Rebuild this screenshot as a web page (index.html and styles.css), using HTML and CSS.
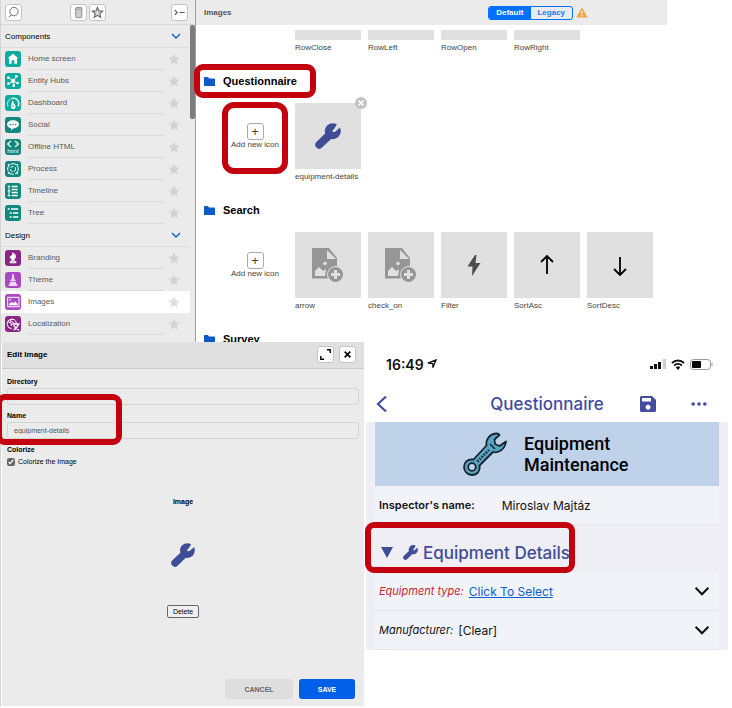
FILE: index.html
```html
<!DOCTYPE html>
<html lang="en">

<head>
    <meta charset="UTF-8">
    <meta name="viewport" content="width=device-width, initial-scale=1.0">
    <title>Images</title>
    <link rel="stylesheet" href="styles.css">
</head>

<body>
    <svg class="defs" aria-hidden="true">
        <mask id="notch" maskUnits="userSpaceOnUse" x="0" y="0" width="26" height="26">
            <rect width="26" height="26" fill="#fff" />
            <path d="M19.500 5.500L22.500 0H26v3.500L20.500 8.500Q18 9.500 17.500 8.500 17 7.500 19.500 5.500z" fill="#000" />
        </mask>
        <symbol id="star" viewBox="0 0 24 24">
            <path d="M12 1l3.200 7.600 8.300.7-6.300 5.400 1.900 8.100L12 18.500l-7.100 4.300 1.900-8.100L.5 9.300l8.300-.7z" />
        </symbol>
        <symbol id="wrench" viewBox="0 0 26 26">
            <g mask="url(#notch)">
                <circle cx="17.800" cy="8.200" r="8" />
                <path d="M4.300 21.700L15 11.500" stroke="currentColor" stroke-width="8" stroke-linecap="round" />
            </g>
        </symbol>
        <symbol id="folder" viewBox="0 0 22 18">
            <path d="M0 1.500Q0 0 1.500 0H8l2 3h10.500Q22 3 22 4.500V18H0z" />
        </symbol>
        <symbol id="chevron" viewBox="0 0 20 12">
            <path d="M2 2l8 8 8-8" fill="none" stroke="currentColor" stroke-width="2.600" />
        </symbol>
        <symbol id="newimage" viewBox="0 0 32 34">
            <path d="M0 0h17l8 10v8a8.800 8.800 0 0 0-9 12.500H0z" />
            <path d="M15 2v9h9z" fill="#e0e0e0" />
            <circle cx="13" cy="15.500" r="1.800" fill="#e0e0e0" />
            <path d="M3 28v-5l4-4 4 4 3-2-1 7z" fill="#e0e0e0" />
            <circle cx="23.500" cy="26.500" r="7.500" />
            <path d="M23.500 22v9M19 26.500h9" stroke="#e0e0e0" stroke-width="3" />
        </symbol>
    </svg>

    <div class="page">
        <div class="workspace">
            <nav class="sidebar">
                <div class="toolbar">
                    <button class="tool" aria-label="Search"><svg viewBox="0 0 16 16"><circle cx="8.500" cy="7" r="4.500" fill="none" stroke="#666" /><path d="M5.500 10.500L3 13" stroke="#666" /></svg></button>
                    <div class="toolGroup">
                        <button class="tool" aria-label="Device"><svg viewBox="0 0 16 16"><rect x="5" y="2.500" width="6.500" height="11" rx="1" fill="#ccc" stroke="#888" /><path d="M5 4.500h6.500" stroke="#999" /></svg></button>
                        <button class="tool" aria-label="Favorites"><svg viewBox="0 0 16 16"><path d="M8 2.500l1.500 3.800 4 .3-3.100 2.600 1 4L8 11l-3.400 2.200 1-4-3.100-2.600 4-.3z" fill="#ddd" stroke="#666" stroke-width="1.200" /></svg></button>
                    </div>
                    <button class="tool" aria-label="Collapse"><svg viewBox="0 0 16 16"><path d="M3 5.500L5.500 8 3 10.500M8 8h5.500" fill="none" stroke="#555" stroke-width="1.200" /></svg></button>
                </div>
                <div class="list">
                    <button class="group">Components <svg><use href="#chevron" /></svg></button>
                    <ul>
                        <li><svg class="ico teal" viewBox="0 0 24 24"><path d="M12 4l-8 7h2v8h4v-5h4v5h4v-8h2z" /></svg><a href="#">Home screen</a><svg class="star"><use href="#star" /></svg></li>
                        <li><svg class="ico teal" viewBox="0 0 24 24"><path d="M12 12L5 6M12 12l6-7M12 12l7 3M12 12l-6 4M12 12l2 7" class="line thin" /><circle cx="12" cy="12" r="3.200" /><circle cx="5" cy="7" r="2" /><circle cx="17" cy="5" r="2" /><circle cx="19" cy="15" r="2" /><circle cx="5" cy="16" r="2" /><circle cx="13" cy="19" r="2" /></svg><a href="#">Entity Hubs</a><svg class="star"><use href="#star" /></svg></li>
                        <li><svg class="ico teal" viewBox="0 0 24 24"><path d="M4.500 17a8 8 0 0 1 4-11" class="line" opacity=".6" /><path d="M9.500 5.500a8 8 0 0 1 10 11.500" class="line" /><path d="M11 8l4 7a3.500 3.500 0 1 1-6 2z" /><circle cx="12" cy="16.500" r="1.200" fill="#0bab9d" /></svg><a href="#">Dashboard</a><svg class="star"><use href="#star" /></svg></li>
                        <li><svg class="ico green" viewBox="0 0 24 24"><path d="M12 5c5 0 9 2.500 9 6s-4 6-8 6l-4 3v-3c-3-.5-6-3-6-6 0-3.500 4-6 9-6z" /><path d="M7 10.500h2v2H7zm4 0h2v2h-2zm4 0h2v2h-2z" fill="#12877d" /></svg><a href="#">Social</a><svg class="star"><use href="#star" /></svg></li>
                        <li><svg class="ico green" viewBox="0 0 24 24"><path d="M9 3L4 7.500 9 12M15 3l5 4.500-5 4.500" class="line" /><text x="12" y="21.500" text-anchor="middle">html</text></svg><a href="#">Offline HTML</a><svg class="star"><use href="#star" /></svg></li>
                        <li><svg class="ico green" viewBox="0 0 24 24"><circle cx="12" cy="12" r="8" class="line thin" stroke-dasharray="9 2" /><circle cx="12" cy="12" r="4" class="line thin" stroke-dasharray="5 2" /><path d="M4 4l4 1-3 3zM20 20l-4-1 3-3zM20 4l-1 4-3-3zM4 20l1-4 3 3z" opacity=".8" /></svg><a href="#">Process</a><svg class="star"><use href="#star" /></svg></li>
                        <li><svg class="ico green" viewBox="0 0 24 24"><path d="M6 4v16M4 5h4M4 12h4M4 19h4" class="line thin" /><path d="M10 4h9v2.500h-9zm0 4.500h9V11h-9zM10 13h9v2.500h-9zm0 4.500h9V20h-9z" /></svg><a href="#">Timeline</a><svg class="star"><use href="#star" /></svg></li>
                        <li><svg class="ico green" viewBox="0 0 24 24"><path d="M4 6h3M9 6h11M7 12h3M12 12h8M7 18h3M12 18h8" class="line" /></svg><a href="#">Tree</a><svg class="star"><use href="#star" /></svg></li>
                    </ul>
                    <button class="group">Design <svg><use href="#chevron" /></svg></button>
                    <ul>
                        <li><svg class="ico plum" viewBox="0 0 24 24"><path d="M11 3l2 2c3 1 4 4 3 7l-2 2 1 2H9l1-3c-2 0-3-1-3-3l4-3zM7 17h10v3H7z" /></svg><a href="#">Branding</a><svg class="star"><use href="#star" /></svg></li>
                        <li><svg class="ico violet" viewBox="0 0 24 24"><path d="M11 3h2l1 8 2 1v2H8v-2l2-1zM8 15h8l3 6H5z" opacity=".8" /></svg><a href="#">Theme</a><svg class="star"><use href="#star" /></svg></li>
                        <li class="active"><svg class="ico violet" viewBox="0 0 24 24"><rect x="4" y="5" width="17" height="14" class="line thin" /><path d="M6 17v-2l4-3 3 2 2-3 4 4v2z" /><circle cx="8" cy="8.500" r="1.200" /></svg><a href="#">Images</a><svg class="star"><use href="#star" /></svg></li>
                        <li><svg class="ico plum" viewBox="0 0 24 24"><path d="M10 19a7 7 0 1 1 7-9M4 8l5 3 1 4M10 4l-2 4 5 2" class="line thin" /><path d="M11 12h11M16.500 10v2M13 21c4-2 6-5 7-9M13 14c2 3 5 6 8 7" class="line" /></svg><a href="#">Localization</a><svg class="star"><use href="#star" /></svg></li>
                    </ul>
                    <div class="thumb"></div>
                </div>
            </nav>

            <main class="images">
                <header class="bar">
                    <h1>Images</h1>
                    <div class="switch">
                        <button class="on">Default</button><button>Legacy</button>
                    </div>
                    <svg class="warn" viewBox="0 0 24 22"><path d="M12 1l11.500 20H.5z" fill="#e9a944" /><path d="M12 8v6M12 16v2.500" stroke="#fff" stroke-width="2.500" /></svg>
                </header>

                <section class="cut">
                    <div class="tiles">
                        <figure><div class="tile"></div><figcaption>RowClose</figcaption></figure>
                        <figure><div class="tile"></div><figcaption>RowLeft</figcaption></figure>
                        <figure><div class="tile"></div><figcaption>RowOpen</figcaption></figure>
                        <figure><div class="tile"></div><figcaption>RowRight</figcaption></figure>
                    </div>
                </section>

                <section class="folder">
                    <h2><svg><use href="#folder" /></svg>Questionnaire<span class="mark markTitle"></span></h2>
                    <div class="tiles">
                        <div class="add">
                            <button id="add1" aria-label="Add new icon">+</button>
                            <label for="add1">Add new icon</label>
                            <span class="mark markAdd"></span>
                        </div>
                        <figure>
                            <div class="tile"><svg class="wrench"><use href="#wrench" /></svg>
                                <button class="remove" aria-label="Remove"><svg viewBox="0 0 12 12"><path d="M3.500 3.500l5 5M8.500 3.500l-5 5" stroke="#fff" stroke-width="1.600" /></svg></button>
                            </div>
                            <figcaption>equipment-details</figcaption>
                        </figure>
                    </div>
                </section>

                <section class="folder">
                    <h2><svg><use href="#folder" /></svg>Search</h2>
                    <div class="tiles">
                        <div class="add">
                            <button id="add2" aria-label="Add new icon">+</button>
                            <label for="add2">Add new icon</label>
                        </div>
                        <figure><div class="tile"><svg class="newimage"><use href="#newimage" /></svg></div><figcaption>arrow</figcaption></figure>
                        <figure><div class="tile"><svg class="newimage"><use href="#newimage" /></svg></div><figcaption>check_on</figcaption></figure>
                        <figure><div class="tile"><svg class="glyph" viewBox="0 0 24 24"><path d="M13 2L5.500 13.500h5L10 23l8.500-13h-5L14.500 2z" fill="#4c4c4c" /></svg></div><figcaption>Filter</figcaption></figure>
                        <figure><div class="tile"><svg class="glyph" viewBox="0 0 24 24"><path d="M12 21V3M6 9l6-6 6 6" fill="none" stroke="#000" stroke-width="1.800" /></svg></div><figcaption>SortAsc</figcaption></figure>
                        <figure><div class="tile"><svg class="glyph" viewBox="0 0 24 24"><path d="M12 4v18M6 16l6 6 6-6" fill="none" stroke="#000" stroke-width="1.800" /></svg></div><figcaption>SortDesc</figcaption></figure>
                    </div>
                </section>

                <section class="folder">
                    <h2><svg><use href="#folder" /></svg>Survey</h2>
                </section>
            </main>
        </div>

        <div class="bottom">
            <form class="dialog">
                <header>
                    <h2>Edit Image</h2>
                    <button type="button" class="tool" aria-label="Expand"><svg viewBox="0 0 16 16"><path d="M9.500 3H13v3.500M3 9.500V13h3.500" fill="none" stroke="#000" stroke-width="1.500" /></svg></button>
                    <button type="button" class="tool" aria-label="Close"><svg viewBox="0 0 16 16"><path d="M5 5l6 6M11 5l-6 6" stroke="#000" stroke-width="1.800" /></svg></button>
                </header>
                <div class="fields">
                    <div class="field">
                        <label for="directory">Directory</label>
                        <input type="text" id="directory">
                    </div>
                    <div class="field">
                        <label for="name">Name</label>
                        <input type="text" id="name" value="equipment-details">
                        <span class="mark markName"></span>
                    </div>
                    <div class="field">
                        <strong>Colorize</strong>
                        <label class="check"><input type="checkbox" checked>Colorize the Image</label>
                    </div>
                </div>
                <div class="preview">
                    <strong>Image</strong>
                    <svg class="wrench"><use href="#wrench" /></svg>
                    <button type="button">Delete</button>
                </div>
                <footer>
                    <button type="button" class="cancel">CANCEL</button>
                    <button type="submit" class="save">SAVE</button>
                </footer>
            </form>

            <div class="phone">
                <div class="status">
                    <time>16:49</time>
                    <svg class="locate" viewBox="0 0 12 12"><path d="M11 1L7 10.500V5.500L1 5z" fill="none" stroke="#111" stroke-width="1.500" /></svg>
                    <svg class="signal" viewBox="0 0 16 10"><path d="M0 7h3v3H0zM4 5h3v5H4zM8 3h3v7H8z" fill="#111" /><path d="M13 0h3v10h-3z" fill="#ccc" /></svg>
                    <svg class="wifi" viewBox="0 0 14 11"><path d="M1 4a8.500 8.500 0 0 1 12 0M3.200 6.500a5.300 5.300 0 0 1 7.600 0" fill="none" stroke="#111" stroke-width="1.800" /><path d="M4.800 8.400a3 3 0 0 1 4.400 0L7 11z" fill="#111" /></svg>
                    <svg class="battery" viewBox="0 0 23 11"><rect x=".5" y=".5" width="20" height="10" rx="3" fill="none" stroke="#999" /><rect x="2" y="2" width="9" height="7" rx="1" fill="#000" /><path d="M22 4v3" stroke="#999" /></svg>
                </div>
                <div class="nav">
                    <button aria-label="Back"><svg class="back" viewBox="0 0 12 18"><path d="M10 1.500L2 9l8 7.500" fill="none" stroke="currentColor" stroke-width="2.200" /></svg></button>
                    <h2>Questionnaire</h2>
                    <div class="actions">
                        <button aria-label="Save"><svg class="disk" viewBox="0 0 18 18"><path fill-rule="evenodd" d="M2.500 1H13l4 4v10.500q0 1.500-1.500 1.500h-13Q1 17 1 15.500v-13Q1 1 2.500 1zM3 3v3.500h9V3zM9 9.800a2.500 2.500 0 1 0 .1 0z" fill="currentColor" /></svg></button>
                        <button aria-label="More"><svg class="dots" viewBox="0 0 16 4"><circle cx="2.200" cy="2" r="1.800" fill="currentColor" /><circle cx="8" cy="2" r="1.800" fill="currentColor" /><circle cx="13.800" cy="2" r="1.800" fill="currentColor" /></svg></button>
                    </div>
                </div>
                <div class="content">
                    <div class="banner">
                        <svg viewBox="0 0 44 44">
                            <path d="M34 1.500c-7 0-11.500 5.500-10.500 12L10.500 27.500C4.500 26.500 1 30.500 1 35c0 4.500 3.500 8 8 8 5 0 8.500-4 7.500-9.500L30 20c6 1.500 12-3 13-10.500l-6.500 4.500-4.500-2-.5-4.500 5-4.500q-1-1.500-2.500-1.500z" fill="#5ba3c4" stroke="#16232c" stroke-width="1.800" stroke-linejoin="round" />
                            <circle cx="9" cy="35" r="3.800" fill="#bfd2ea" stroke="#16232c" stroke-width="1.800" />
                            <path d="M14.500 29.500L26 18" stroke="#16232c" stroke-width="2.500" stroke-dasharray="1.500 1.500" />
                            <path d="M27 12l5 5" stroke="#16232c" stroke-width="1.500" />
                        </svg>
                        <h3>Equipment<br>Maintenance</h3>
                    </div>
                    <div class="row inspector"><b>Inspector's name:</b><span>Miroslav Majtáz</span></div>
                    <h3 class="details"><svg class="tri" viewBox="0 0 12 11"><path d="M0 0h12L6 11z" /></svg><svg class="wrench"><use href="#wrench" /></svg>Equipment Details<span class="mark markDetails"></span></h3>
                    <div class="row required"><i>Equipment type:</i><a href="#">Click To Select</a><svg class="open"><use href="#chevron" /></svg></div>
                    <div class="row"><i>Manufacturer:</i><span>[Clear]</span><svg class="open"><use href="#chevron" /></svg></div>
                </div>
            </div>
        </div>
    </div>
</body>

</html>
```

FILE: styles.css
```css
* {
    padding: 0;
    margin: 0;
    box-sizing: border-box;
    list-style: none;
}

body {
    background-color: #fff;
    color: #000;
    font-family: "Liberation Sans", Arial, sans-serif;
    font-size: 8px;
    overflow-x: hidden;
}

button,
input {
    font: inherit;
    color: inherit;
}

svg {
    display: block;
    flex: none;
}

.defs {
    position: absolute;
    width: 0;
    height: 0;
}

.page {
    border-left: 1px solid #d4d4d4;
}

/* red frames drawn over the content */
.mark {
    position: absolute;
    border: 6px solid #c4000f;
    border-radius: 9px;
    pointer-events: none;
    z-index: 2;
}

.wrench {
    fill: #3f4c96;
    color: #3f4c96;
}

.workspace {
    display: flex;
    height: 342px;
    padding-right: 65px;
    overflow: hidden;
}

/* sidebar */
.sidebar {
    flex: none;
    width: 195px;
    background-color: #ebebeb;
    border-right: 1px solid #a0a0a0;
}

.toolbar {
    display: flex;
    justify-content: space-between;
    align-items: center;
    height: 25px;
    padding: 0 7px 0 4px;
    border-bottom: 1px solid #d6d6d6;
}

.toolGroup {
    display: flex;
    gap: 2px;
    margin-right: 18px;
}

.tool {
    width: 17px;
    height: 17px;
    background-color: #fff;
    border: 1px solid #c4c4c4;
    border-radius: 3px;
}

.tool svg {
    width: 15px;
    height: 15px;
}

.list {
    position: relative;
    padding-right: 5px;
}

.thumb {
    position: absolute;
    top: 0;
    right: 0;
    width: 5px;
    height: 94px;
    border-radius: 2px;
    background-color: #7c7c7c;
}

.group {
    display: flex;
    justify-content: space-between;
    align-items: center;
    width: 100%;
    height: 23px;
    padding: 0 9px 0 4px;
    background: none;
    border: 0;
    border-bottom: 1px solid #dcdcdc;
}

.group svg {
    width: 10px;
    height: 6px;
    color: #0a5ac8;
}

.sidebar li {
    display: flex;
    align-items: center;
    height: 22px;
    padding: 0 6px 0 4px;
    color: #5a5a5a;
}

.sidebar li.active {
    background-color: #fff;
}

.sidebar li a {
    flex: 1;
    margin-left: 7px;
    line-height: 21px;
    border-bottom: 1px solid #dadada;
    color: inherit;
    text-decoration: none;
}

.sidebar li.active a {
    border-color: #fff;
}

.ico {
    width: 16px;
    height: 16px;
    border-radius: 3px;
    fill: #fff;
}

.ico .line {
    fill: none;
    stroke: #fff;
    stroke-width: 2;
}

.ico .thin {
    stroke-width: 1.5;
}

.ico text {
    font-size: 9px;
}

.teal {
    background-color: #0bab9d;
}

.green {
    background-color: #12877d;
}

.plum {
    background-color: #8a2686;
}

.violet {
    background-color: #ab48c4;
}

.star {
    width: 20px;
    height: 12px;
    fill: #d2d2d2;
}

.active .star {
    fill: #dedede;
}

/* images list */
.images {
    flex: 1;
    min-width: 0;
}

.bar {
    display: flex;
    align-items: center;
    height: 25px;
    padding: 0 79px 0 8px;
    background-color: #ebebeb;
}

.bar h1 {
    flex: 1;
    font-size: 8px;
    color: #555;
}

.switch {
    display: flex;
    width: 85px;
    height: 14px;
    border: 1px solid #0070ff;
    border-radius: 3px;
    overflow: hidden;
}

.switch button {
    flex: 1;
    border: 0;
    background: none;
    color: #1a78f0;
    font-size: 8px;
    font-weight: bold;
}

.switch .on {
    background-color: #0070ff;
    color: #fff;
}

.warn {
    width: 12px;
    height: 11px;
    margin-left: 3px;
}

.tiles {
    display: grid;
    grid-template-columns: repeat(auto-fill, 66px);
    gap: 7px;
    padding-left: 26px;
}

.tile {
    position: relative;
    display: flex;
    justify-content: center;
    align-items: center;
    height: 66px;
    background-color: #e0e0e0;
}

figcaption {
    line-height: 15px;
    color: #444;
    white-space: nowrap;
}

.cut {
    padding: 5px 0 16px;
}

.cut figure:first-child {
    grid-column-start: 2;
}

.cut .tile {
    height: 10px;
}

.folder {
    padding-bottom: 16px;
}

.folder h2 {
    position: relative;
    display: flex;
    align-items: center;
    height: 20px;
    margin-bottom: 12px;
    padding-left: 8px;
    font-size: 11px;
}

.folder h2 svg {
    width: 11px;
    height: 9px;
    margin-right: 8px;
    fill: #0a5ac8;
}

.markTitle {
    left: -2px;
    top: -7px;
    width: 122px;
    height: 34px;
}

.add {
    position: relative;
    display: flex;
    flex-direction: column;
    justify-content: center;
    align-items: center;
    height: 66px;
    color: #444;
}

.add button {
    width: 17px;
    height: 17px;
    background-color: #fff;
    border: 1px solid #aaa;
    border-radius: 3px;
    font-size: 13px;
    line-height: 13px;
}

.add label {
    line-height: 10px;
    white-space: nowrap;
}

.markAdd {
    top: -1px;
    left: 0;
    width: 66px;
    height: 72px;
    border-radius: 12px;
}

.tile .wrench {
    width: 26px;
    height: 26px;
}

.newimage {
    width: 32px;
    height: 34px;
    fill: #969696;
}

.glyph {
    width: 24px;
    height: 24px;
}

.remove {
    position: absolute;
    top: -6px;
    right: -6px;
    width: 12px;
    height: 12px;
    border: 0;
    border-radius: 50%;
    background-color: #c2c2c2;
}

/* bottom half */
.bottom {
    display: grid;
    grid-template-columns: 1fr 1fr;
    gap: 2px;
    align-items: start;
    padding: 0 4px 0 1px;
}

.dialog {
    background-color: #ebebeb;
    font-size: 7px;
}

.dialog header {
    display: flex;
    align-items: center;
    gap: 5px;
    height: 27px;
    padding: 0 8px 2px 5px;
    background-color: #e0e0e0;
    border-bottom: 1px solid #c8c8c8;
}

.dialog h2 {
    flex: 1;
    font-size: 8px;
}

.fields {
    display: flex;
    flex-direction: column;
    gap: 6px;
    padding: 8px 5px 0;
}

.field {
    position: relative;
    display: flex;
    flex-direction: column;
    gap: 1px;
    line-height: 10px;
    font-weight: bold;
}

.field input[type="text"] {
    width: 100%;
    height: 17px;
    padding: 0 6px;
    border: 1px solid #d4d4d4;
    border-radius: 3px;
    background: none;
    font-weight: normal;
    color: #555;
}

.check {
    display: flex;
    align-items: center;
    gap: 3px;
    height: 12px;
    font-weight: normal;
}

.check input {
    width: 8px;
    height: 8px;
    accent-color: #666;
}

.markName {
    top: -17px;
    left: -11px;
    width: 126px;
    height: 51px;
}

.preview {
    display: flex;
    flex-direction: column;
    align-items: center;
    padding-top: 29px;
    line-height: 10px;
}

.preview .wrench {
    width: 24px;
    height: 24px;
    margin: 36px 0 38px;
}

.preview button {
    width: 32px;
    height: 13px;
    border: 1px solid #666;
    border-radius: 2px;
    background-color: #f0f0f0;
}

.dialog footer {
    display: flex;
    justify-content: flex-end;
    gap: 6px;
    padding: 61px 9px 7px;
}

.dialog footer button {
    height: 20px;
    border: 0;
    border-radius: 3px;
    font-weight: bold;
}

.cancel {
    width: 68px;
    background-color: #dedede;
    color: #666;
}

.save {
    width: 56px;
    background-color: #005fe8;
    color: #fff;
}

.phone {
    font-family: Inter, "Liberation Sans", sans-serif;
    background-color: #efeef4;
}

.status {
    display: flex;
    align-items: center;
    height: 44px;
    padding: 0 15px 0 20px;
    background-color: #fff;
}

.status time {
    font-size: 14px;
    font-weight: 600;
    color: #111;
}

.locate {
    width: 10px;
    height: 10px;
    margin-left: 3px;
}

.signal {
    width: 16px;
    height: 10px;
    margin-left: auto;
}

.wifi {
    width: 14px;
    height: 11px;
    margin: 0 5px;
}

.battery {
    width: 23px;
    height: 11px;
}

.nav {
    display: grid;
    grid-template-columns: 1fr auto 1fr;
    align-items: center;
    height: 36px;
    padding: 0 10px;
    background-color: #fff;
    color: #444c9f;
}

.nav h2 {
    font-size: 17px;
    font-weight: 500;
}

.nav button {
    border: 0;
    background: none;
}

.back {
    width: 12px;
    height: 18px;
}

.actions {
    display: flex;
    justify-content: flex-end;
    align-items: center;
    gap: 34px;
    padding-right: 11px;
}

.disk {
    width: 18px;
    height: 18px;
}

.dots {
    width: 16px;
    height: 4px;
}

.content {
    padding: 0 9px;
}

.banner {
    display: flex;
    align-items: center;
    gap: 17px;
    height: 64px;
    padding-left: 88px;
    background-color: #bfd2ea;
}

.banner svg {
    width: 44px;
    height: 44px;
}

.banner h3 {
    font-family: Roboto, sans-serif;
    font-size: 18px;
    line-height: 21px;
    font-weight: 500;
}

.row {
    display: flex;
    align-items: center;
    gap: 5px;
    height: 39px;
    padding: 0 9px 0 4px;
    border-bottom: 1px solid #e4e6ef;
    background-color: #f2f3f9;
    font-size: 12px;
    color: #111;
}

.row b,
.row i {
    font-size: 11px;
}

.row b {
    font-weight: 600;
}

.inspector {
    gap: 27px;
}

.required i {
    color: #cc1f36;
}

.row a {
    color: #0a5fd0;
}

.open {
    width: 16px;
    height: 10px;
    margin-left: auto;
}

.details {
    position: relative;
    display: flex;
    align-items: center;
    height: 47px;
    padding: 8px 0 0 6px;
    font-size: 17px;
    font-weight: 500;
    color: #3f4c96;
    white-space: nowrap;
}

.tri {
    width: 12px;
    height: 11px;
    margin-right: 10px;
    fill: #3f4c96;
}

.details .wrench {
    width: 15px;
    height: 15px;
    margin-right: 5px;
}

.markDetails {
    top: -3px;
    left: -10px;
    width: 210px;
    height: 51px;
}
```
